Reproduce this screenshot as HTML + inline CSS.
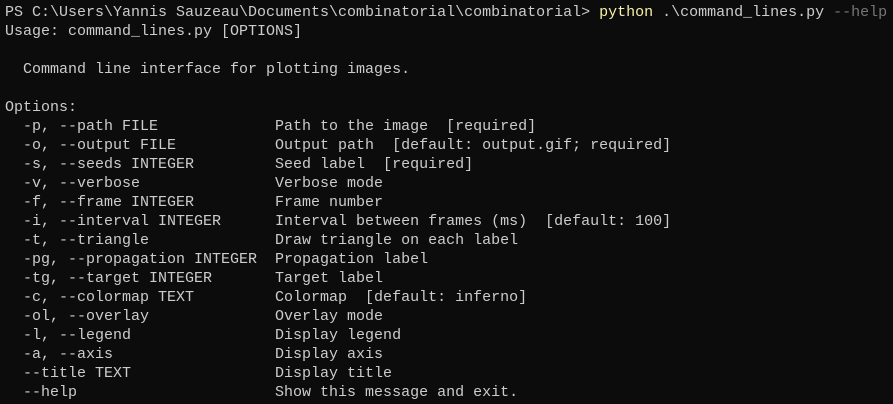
<!DOCTYPE html>
<html><head><style>
html,body{margin:0;padding:0;background:#0c0c0c;width:893px;height:404px;overflow:hidden}
pre{margin:0;padding:3px 0 0 5px;font-family:"Liberation Mono",monospace;font-size:15px;line-height:19px;color:#cccccc;white-space:pre}
.y{color:#f9f1a5}.g{color:#767676}
</style></head><body><pre>PS C:\Users\Yannis Sauzeau\Documents\combinatorial\combinatorial&gt; <span class="y">python</span> .\command_lines.py <span class="g">--help</span>
Usage: command_lines.py [OPTIONS]

  Command line interface for plotting images.

Options:
  -p, --path FILE             Path to the image  [required]
  -o, --output FILE           Output path  [default: output.gif; required]
  -s, --seeds INTEGER         Seed label  [required]
  -v, --verbose               Verbose mode
  -f, --frame INTEGER         Frame number
  -i, --interval INTEGER      Interval between frames (ms)  [default: 100]
  -t, --triangle              Draw triangle on each label
  -pg, --propagation INTEGER  Propagation label
  -tg, --target INTEGER       Target label
  -c, --colormap TEXT         Colormap  [default: inferno]
  -ol, --overlay              Overlay mode
  -l, --legend                Display legend
  -a, --axis                  Display axis
  --title TEXT                Display title
  --help                      Show this message and exit.
</pre></body></html>
